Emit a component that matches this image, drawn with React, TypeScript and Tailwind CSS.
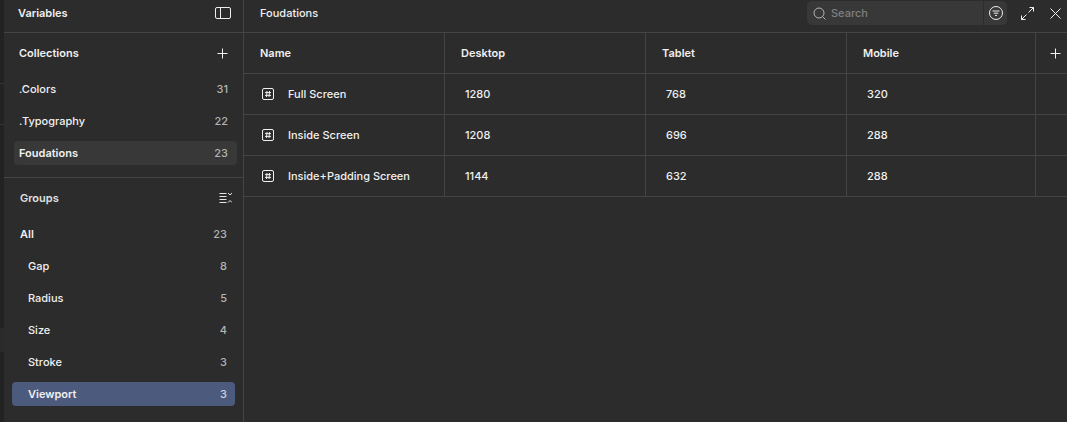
const collections = [
  { name: '.Colors', count: 31 },
  { name: '.Typography', count: 22 },
  { name: 'Foudations', count: 23, active: true },
]

const groups = [
  { name: 'Gap', count: 8 },
  { name: 'Radius', count: 5 },
  { name: 'Size', count: 4 },
  { name: 'Stroke', count: 3 },
  { name: 'Viewport', count: 3, active: true },
]

const rows = [
  { name: 'Full Screen', desktop: 1280, tablet: 768, mobile: 320 },
  { name: 'Inside Screen', desktop: 1208, tablet: 696, mobile: 288 },
  { name: 'Inside+Padding Screen', desktop: 1144, tablet: 632, mobile: 288 },
]

function PlusIcon() {
  return (
    <svg width="11" height="11" viewBox="0 0 11 11" fill="none" stroke="#f0f0f0" strokeWidth="1">
      <path d="M5.5 0.5v10M0.5 5.5h10" />
    </svg>
  )
}

function HashIcon() {
  return (
    <svg width="12" height="12" viewBox="0 0 12 12" fill="none" stroke="#f0f0f0" strokeWidth="1">
      <rect x="0.5" y="0.5" width="11" height="11" rx="1.5" />
      <path d="M3 4.6h6M3 7.4h6M5 3l-.5 6M7.5 3l-.5 6" />
    </svg>
  )
}

export default function App() {
  return (
    <div className="flex h-[422px] w-[1067px] overflow-hidden bg-[#2c2c2c] font-['Inter',sans-serif] text-[11px] text-[#f0f0f0]">
      <div className="flex w-1 flex-col bg-[#222222]">
        <div className="mt-[83px] h-px bg-[#333333]" />
        <div className="mt-10 h-px bg-[#333333]" />
        <div className="mt-[203px] h-6 bg-[#2b2b2b]" />
      </div>

      <aside className="flex w-[240px] flex-col border-r border-[#444444]">
        <div className="flex h-[33px] items-center justify-between border-b border-[#444444] pb-[6px] pl-[14px] pr-3">
          <span className="font-semibold">Variables</span>
          <svg width="16" height="12" viewBox="0 0 16 12" fill="none" stroke="#ededed" strokeWidth="1">
            <rect x="0.5" y="0.5" width="15" height="11" rx="1.5" />
            <path d="M5.5 0.5v11" />
          </svg>
        </div>

        <div className="flex h-10 items-center justify-between pl-[15px] pr-[15px]">
          <span className="font-semibold">Collections</span>
          <PlusIcon />
        </div>
        <div className="flex flex-col pl-[10px] pr-[6px] pt-1">
          {collections.map((c) => (
            <div
              key={c.name}
              className={`mb-2 flex h-6 items-center justify-between rounded-[4px] pl-[5px] pr-[9px] ${c.active ? 'bg-[#383838] font-semibold' : 'font-medium'}`}
            >
              <span>{c.name}</span>
              <span className="font-medium text-[#b3b3b3]">{c.count}</span>
            </div>
          ))}
        </div>

        <div className="mt-1 flex h-[41px] items-center justify-between border-t border-[#444444] pl-4 pr-[11px]">
          <span className="font-semibold text-[#e0e0e0]">Groups</span>
          <svg width="13" height="12" viewBox="0 0 13 12" fill="none" stroke="#e6e6e6" strokeWidth="1">
            <path d="M0.5 1.5h7M0.5 4.5h7M0.5 7.5h7M0.5 10.5h7" />
            <path d="M9 1l2 2 2-2M9 10.5l2-2 2 2" />
          </svg>
        </div>

        <div className="flex flex-col px-2 pt-1">
          <div className="mb-2 flex h-6 items-center justify-between pl-2 pr-2 font-semibold">
            <span>All</span>
            <span className="font-medium text-[#b3b3b3]">23</span>
          </div>
          {groups.map((g) => (
            <div
              key={g.name}
              className={`mb-2 flex h-6 items-center justify-between rounded-[4px] pl-4 pr-2 ${g.active ? 'bg-[#4c5a7d] font-semibold' : 'font-medium'}`}
            >
              <span>{g.name}</span>
              <span className={`font-medium ${g.active ? 'text-[#d0d4de]' : 'text-[#b3b3b3]'}`}>{g.count}</span>
            </div>
          ))}
        </div>
      </aside>

      <main className="flex flex-1 flex-col">
        <div className="flex h-[33px] items-center border-b border-[#444444] pb-[6px] pl-4">
          <span className="font-medium">Foudations</span>
          <div className="ml-auto flex h-6 w-[200px] items-center rounded-[5px] bg-[#383838]">
            <svg className="ml-[6px]" width="13" height="13" viewBox="0 0 13 13" fill="none" stroke="#b3b3b3" strokeWidth="1">
              <circle cx="6" cy="6" r="5" />
              <path d="M9.6 9.6l3 3" />
            </svg>
            <span className="ml-[5px] font-medium text-[#808080]">Search</span>
            <div className="ml-auto flex h-full w-6 items-center justify-center border-l border-[#2c2c2c]">
              <svg width="14" height="14" viewBox="0 0 14 14" fill="none" stroke="#ededed" strokeWidth="1">
                <circle cx="7" cy="7" r="6.5" />
                <path d="M3.5 5h7M4.7 7.2h4.6M6 9.4h2" />
              </svg>
            </div>
          </div>
          <svg className="ml-[14px]" width="13" height="13" viewBox="0 0 13 13" fill="none" stroke="#f0f0f0" strokeWidth="1">
            <path d="M7.5 5.5l5-5M8.5 0.5h4v4M5.5 7.5l-5 5M0.5 8.5v4h4" />
          </svg>
          <svg className="ml-[16px] mr-[6px]" width="11" height="11" viewBox="0 0 11 11" fill="none" stroke="#f0f0f0" strokeWidth="1">
            <path d="M0.5 0.5l10 10M10.5 0.5l-10 10" />
          </svg>
        </div>

        <div className="grid h-[41px] grid-cols-[201px_201px_201px_189px_1fr] border-b border-[#444444] font-semibold">
          <div className="flex items-center border-r border-[#444444] pl-4">Name</div>
          <div className="flex items-center border-r border-[#444444] pl-4">Desktop</div>
          <div className="flex items-center border-r border-[#444444] pl-4">Tablet</div>
          <div className="flex items-center border-r border-[#444444] pl-4">Mobile</div>
          <div className="flex items-center justify-end pr-[6px]">
            <PlusIcon />
          </div>
        </div>

        {rows.map((r) => (
          <div
            key={r.name}
            className="grid h-[41px] grid-cols-[201px_201px_201px_189px_1fr] border-b border-[#444444] font-medium"
          >
            <div className="flex items-center border-r border-[#444444] pl-[18px]">
              <HashIcon />
              <span className="ml-[14px]">{r.name}</span>
            </div>
            <div className="flex items-center border-r border-[#444444] pl-5">{r.desktop}</div>
            <div className="flex items-center border-r border-[#444444] pl-5">{r.tablet}</div>
            <div className="flex items-center border-r border-[#444444] pl-5">{r.mobile}</div>
            <div />
          </div>
        ))}
      </main>
    </div>
  )
}
